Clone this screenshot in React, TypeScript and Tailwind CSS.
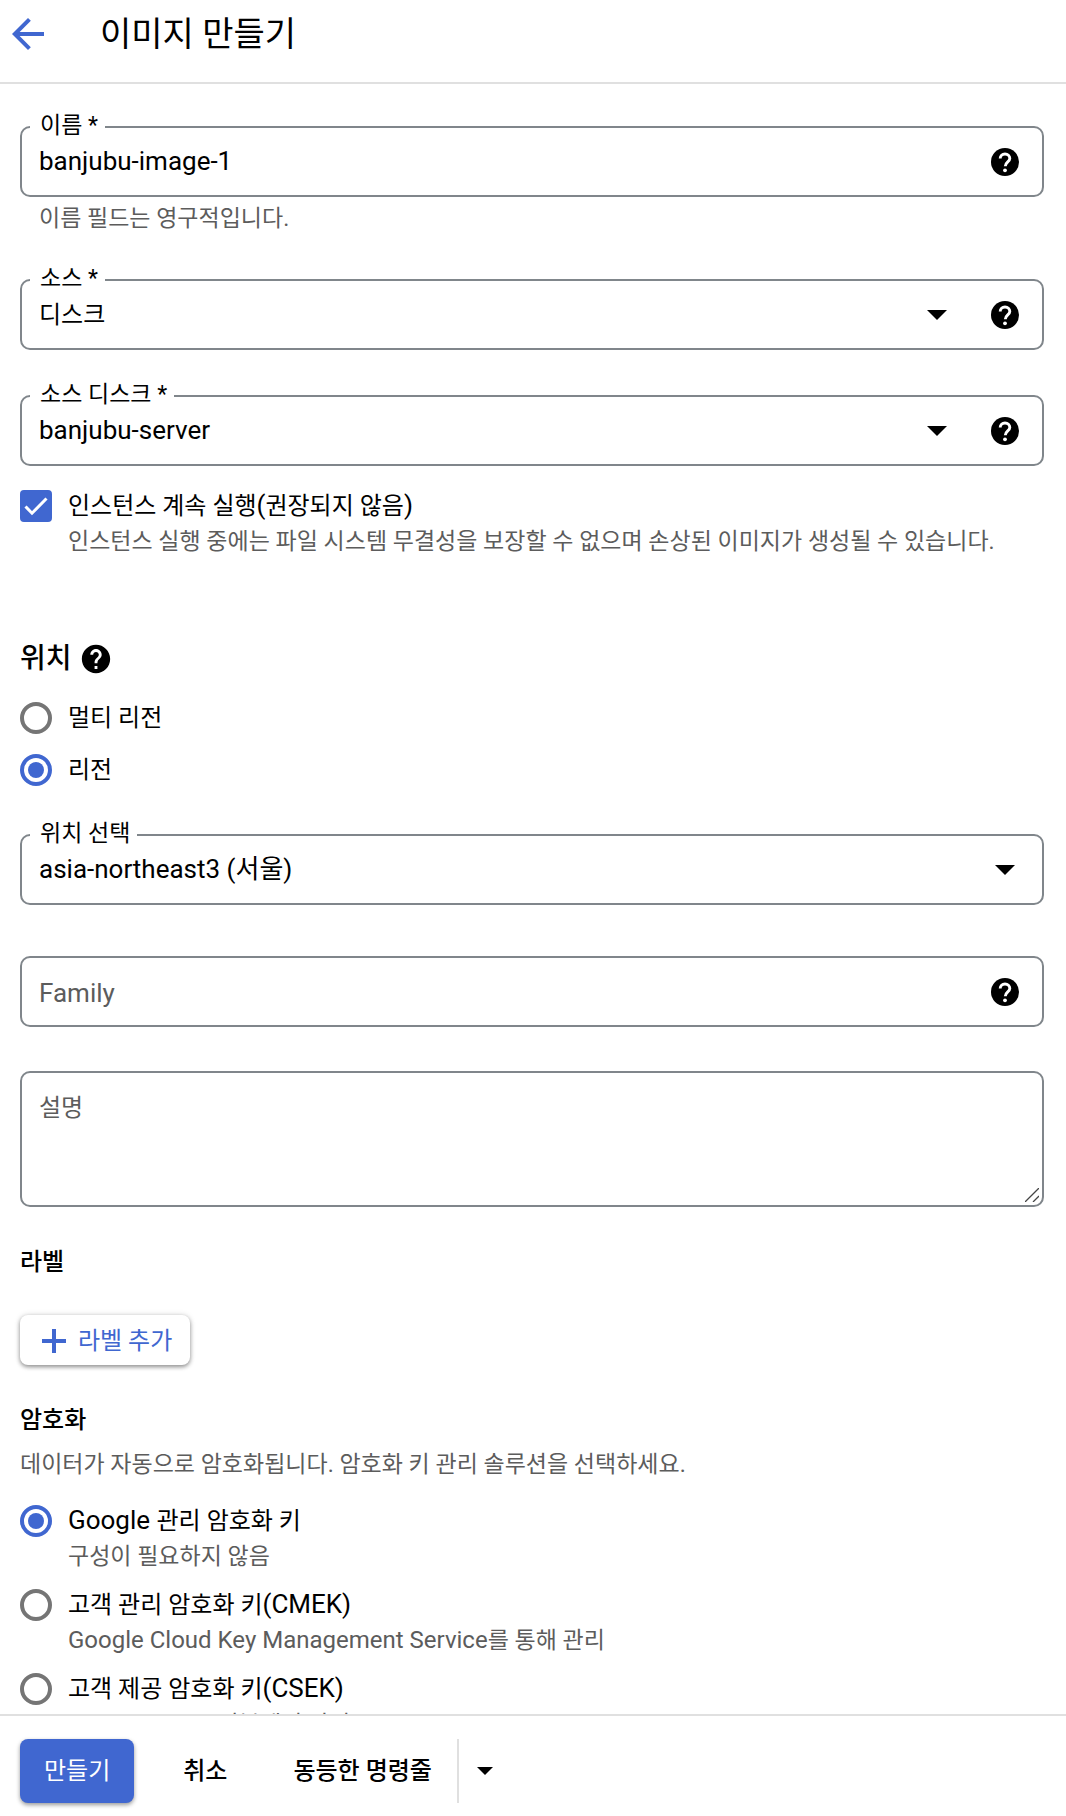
import { useState, type ReactNode } from "react";
import { MdArrowBack, MdHelp } from "react-icons/md";

type Option = {
  id: string;
  title: ReactNode;
  description?: ReactNode;
};

const locationOptions: Option[] = [
  { id: "multi", title: "멀티 리전" },
  { id: "region", title: "리전" },
];

const encryptionOptions: Option[] = [
  {
    id: "google",
    title: (
      <>
        <Latin>Google </Latin>관리 암호화 키
      </>
    ),
    description: "구성이 필요하지 않음",
  },
  {
    id: "cmek",
    title: (
      <>
        고객 관리 암호화 키<Latin>(CMEK)</Latin>
      </>
    ),
    description: (
      <>
        <LatinSmall>Google Cloud Key Management Service</LatinSmall>를 통해 관리
      </>
    ),
  },
  {
    id: "csek",
    title: (
      <>
        고객 제공 암호화 키<Latin>(CSEK)</Latin>
      </>
    ),
    description: (
      <>
        <LatinSmall>Google Cloud </LatinSmall>외부에서 관리
      </>
    ),
  },
];

// Roboto runs smaller than the Korean face, so Latin words get a size of their own
function Latin({ children }: { children: ReactNode }) {
  return <span className="text-[26px] leading-none">{children}</span>;
}

function LatinSmall({ children }: { children: ReactNode }) {
  return <span className="text-2xl leading-none">{children}</span>;
}

function HelpButton({ label }: { label: string }) {
  return (
    <button type="button" aria-label={label} className="shrink-0 cursor-pointer">
      <svg viewBox="0 0 28 28" className="h-7 w-7">
        <circle cx="14" cy="14" r="14" fill="#000" />
        <path
          d="M9.2 10.6C9.2 7.8 11.2 6 14 6s4.800 1.800 4.800 4.400c0 3.300-4.500 3.700-4.500 7.800"
          fill="none"
          stroke="#fff"
          strokeWidth="2.900"
        />
        <circle cx="14" cy="22.300" r="1.900" fill="#fff" />
      </svg>
    </button>
  );
}

function Field({ id, label, children }: { id: string; label?: string; children: ReactNode }) {
  return (
    <div className="relative flex h-[71px] items-center rounded-[10px] border-2 border-[#80868b] pr-[23px]">
      {label && (
        <label htmlFor={id} className="absolute -top-4 left-2 bg-white pr-[7px] pl-[10px] text-[23px] leading-7">
          {label}
        </label>
      )}
      {children}
    </div>
  );
}

function SelectField({
  id,
  label,
  options,
  help,
}: {
  id: string;
  label: string;
  options: string[];
  help?: string;
}) {
  return (
    <Field id={id} label={label}>
      <div className="relative flex h-full min-w-0 flex-1 items-center">
        <select
          id={id}
          className={`h-full w-full cursor-pointer appearance-none bg-transparent pl-[17px] outline-none ${
            /^[a-z]/.test(options[0]) ? "text-[26px]" : "text-2xl"
          }`}
        >
          {options.map((option) => (
            <option key={option}>{option}</option>
          ))}
        </select>
        <svg
          viewBox="0 0 20 10"
          className={`pointer-events-none absolute h-[10px] w-5 ${help ? "right-0" : "right-1"}`}
        >
          <path d="M0 0h20L10 10z" />
        </svg>
      </div>
      {help && (
        <div className="ml-11 flex">
          <HelpButton label={help} />
        </div>
      )}
    </Field>
  );
}

function RadioGroup({
  name,
  options,
  value,
  onChange,
}: {
  name: string;
  options: Option[];
  value: string;
  onChange: (id: string) => void;
}) {
  return (
    <>
      {options.map((option) => (
        <label key={option.id} className="flex cursor-pointer items-start gap-4">
          <input
            type="radio"
            name={name}
            checked={value === option.id}
            onChange={() => onChange(option.id)}
            className="h-8 w-8 shrink-0 appearance-none rounded-full border-4 border-[#757575] bg-clip-content p-1 checked:border-[#4067d0] checked:bg-[#4067d0]"
          />
          <span className="min-w-0">
            <span className="block text-2xl leading-8">{option.title}</span>
            {option.description && (
              <span className="block text-[23px] leading-10 text-[#5c5c5c]">{option.description}</span>
            )}
          </span>
        </label>
      ))}
    </>
  );
}

export default function App() {
  const [name, setName] = useState("banjubu-image-1");
  const [keepRunning, setKeepRunning] = useState(true);
  const [location, setLocation] = useState("region");
  const [encryption, setEncryption] = useState("google");

  return (
    <div className="flex h-screen flex-col bg-white font-[Roboto,'Noto_Sans_CJK_KR',sans-serif] text-black">
      <header className="flex h-[84px] shrink-0 items-start gap-12 border-b-2 border-[#e0e0e0] pt-[10px] pl-1">
        <button type="button" aria-label="뒤로" className="cursor-pointer text-[#4067d0]">
          <MdArrowBack className="h-12 w-12" />
        </button>
        <h1 className="text-[34px] leading-12">이미지 만들기</h1>
      </header>

      <main className="min-h-0 flex-1 overflow-y-auto pt-[42px] pr-[22px] pl-5 [scrollbar-width:none]">
        <Field id="name" label="이름 *">
          <input
            id="name"
            type="text"
            value={name}
            onChange={(e) => setName(e.target.value)}
            className="h-full min-w-0 flex-1 pb-0.5 pl-[17px] text-[26px] outline-none"
          />
          <HelpButton label="이름 도움말" />
        </Field>
        <p className="mt-1.5 pl-[19px] text-[23px] leading-8 text-[#5c5c5c]">이름 필드는 영구적입니다.</p>

        <div className="mt-11 flex flex-col gap-[45px]">
          <SelectField id="source" label="소스 *" options={["디스크", "스냅샷", "이미지"]} help="소스 도움말" />
          <SelectField id="disk" label="소스 디스크 *" options={["banjubu-server"]} help="소스 디스크 도움말" />
        </div>

        <label className="mt-6 flex cursor-pointer items-start gap-4">
          <span className="relative flex shrink-0">
            <input
              type="checkbox"
              checked={keepRunning}
              onChange={(e) => setKeepRunning(e.target.checked)}
              className="h-8 w-8 appearance-none rounded-[4px] border-4 border-[#757575] checked:border-[#4067d0] checked:bg-[#4067d0]"
            />
            {keepRunning && (
              <svg viewBox="0 0 32 32" className="pointer-events-none absolute inset-0 h-8 w-8">
                <path d="M5.500 16.500l6.500 6.700L26.500 8.500" fill="none" stroke="#fff" strokeWidth="3" />
              </svg>
            )}
          </span>
          <span className="min-w-0">
            <span className="block text-2xl leading-8">
              인스턴스 계속 실행<Latin>(</Latin>권장되지 않음<Latin>)</Latin>
            </span>
            <span className="block text-[23px] leading-10 text-[#5c5c5c]">
              인스턴스 실행 중에는 파일 시스템 무결성을 보장할 수 없으며 손상된 이미지가 생성될 수 있습니다.
            </span>
          </span>
        </label>

        <section className="mt-[77px]">
          <div className="flex items-center gap-[7px]">
            <h2 className="text-[28px] leading-10 font-medium">위치</h2>
            <button type="button" aria-label="위치 도움말" className="cursor-pointer">
              <MdHelp className="h-[34px] w-[34px]" />
            </button>
          </div>
          <div className="mt-[23px] flex flex-col gap-5">
            <RadioGroup name="location" options={locationOptions} value={location} onChange={setLocation} />
          </div>
          <div className="mt-12">
            <SelectField id="region" label="위치 선택" options={["asia-northeast3 (서울)"]} />
          </div>
        </section>

        <div className="mt-[51px]">
          <Field id="family">
            <input
              id="family"
              type="text"
              aria-label="Family"
              placeholder="Family"
              className="h-full min-w-0 flex-1 pt-0.5 pl-[17px] text-[26px] outline-none placeholder:text-[#5c5c5c]"
            />
            <HelpButton label="Family 도움말" />
          </Field>
        </div>

        <div className="relative mt-11 flex">
          <textarea
            aria-label="설명"
            placeholder="설명"
            className="h-[136px] w-full resize-none rounded-[10px] border-2 border-[#80868b] px-[17px] pt-[19px] text-2xl leading-8 outline-none placeholder:text-[#5c5c5c]"
          />
          <svg viewBox="0 0 14 14" className="pointer-events-none absolute right-[5px] bottom-[5px] h-[14px] w-[14px]">
            <path d="M0 14L14 0M8 14l6-6" fill="none" stroke="#444" strokeWidth="1.300" />
          </svg>
        </div>

        <section className="mt-[39px]">
          <h3 className="text-2xl leading-8 font-medium">라벨</h3>
          <button
            type="button"
            className="mt-[37px] flex h-[50px] cursor-pointer items-center gap-3 rounded-lg bg-white pt-px pr-[18px] pl-[22px] text-2xl text-[#4067d0] shadow-[0_2px_4px_rgba(0,0,0,0.4),0_0_6px_rgba(0,0,0,0.12)]"
          >
            <svg viewBox="0 0 24 24" className="h-6 w-6">
              <path d="M12 0v24M0 12h24" stroke="currentColor" strokeWidth="4" />
            </svg>
            라벨 추가
          </button>
        </section>

        <section className="mt-[39px]">
          <h3 className="text-2xl leading-8 font-medium">암호화</h3>
          <p className="mt-[11px] text-[23px] leading-9 text-[#5c5c5c]">
            데이터가 자동으로 암호화됩니다. 암호화 키 관리 솔루션을 선택하세요.
          </p>
          <div className="mt-[22px] flex flex-col gap-3">
            <RadioGroup name="encryption" options={encryptionOptions} value={encryption} onChange={setEncryption} />
          </div>
        </section>
      </main>

      <footer className="flex shrink-0 items-center border-t-2 border-[#e0e0e0] pt-[23px] pb-[13px] pl-5 text-2xl font-medium">
        <button
          type="button"
          className="h-16 cursor-pointer rounded-lg bg-[#4067d0] px-6 font-normal text-white shadow-[0_2px_4px_rgba(0,0,0,0.4)]"
        >
          만들기
        </button>
        <button type="button" className="ml-6 h-16 cursor-pointer px-[25px]">
          취소
        </button>
        <button type="button" className="ml-4 h-16 cursor-pointer px-[25px]">
          동등한 명령줄
        </button>
        <button
          type="button"
          aria-label="명령줄 옵션 더보기"
          className="flex h-16 cursor-pointer items-center border-l-2 border-[#e0e0e0] px-[18px]"
        >
          <svg viewBox="0 0 16 8" className="h-2 w-4">
            <path d="M0 0h16L8 8z" />
          </svg>
        </button>
      </footer>
    </div>
  );
}
